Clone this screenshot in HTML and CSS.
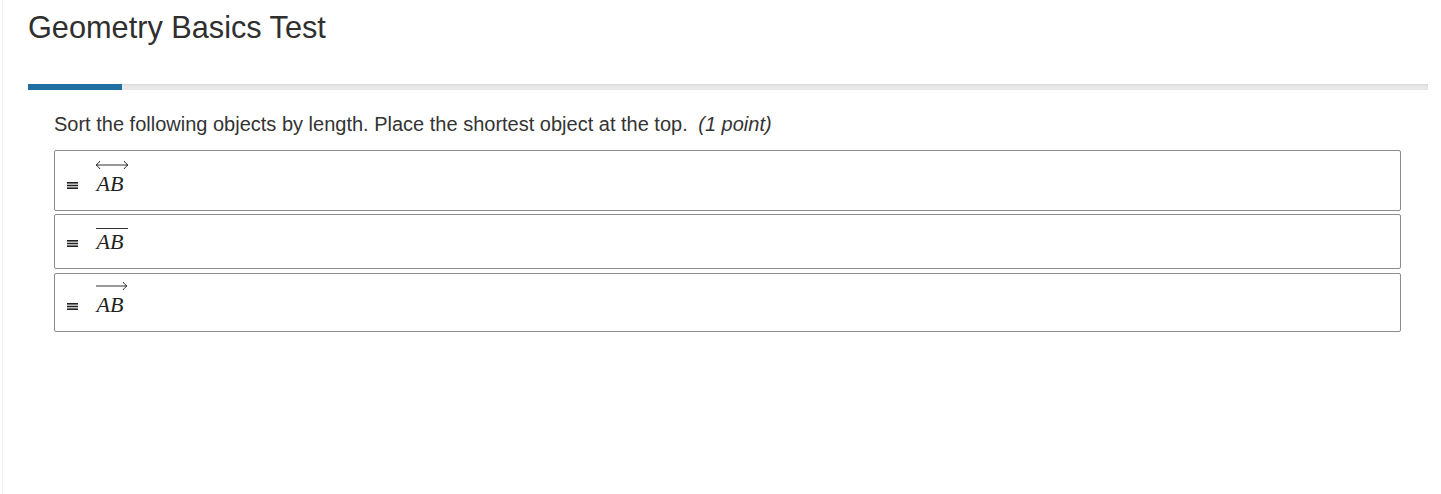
FILE: index.html
```html
<!DOCTYPE html>
<html lang="en">
<head>
<meta charset="utf-8">
<title>Geometry Basics Test</title>
<link rel="stylesheet" href="styles.css">
</head>
<body>
<div class="page">
  <h1 class="title">Geometry Basics Test</h1>
  <div class="progress"><div class="progress-bar" style="width: 6.7%"></div></div>
  <section class="question">
    <p class="prompt">Sort the following objects by length. Place the shortest object at the top. <em class="points">(1 point)</em></p>
    <ul class="sort-list">
      <li class="sort-item">
        <svg class="handle" width="11" height="7" viewBox="0 0 11 7"><rect x="0" y="0" width="11" height="1.6" fill="#222"/><rect x="0" y="2.7" width="11" height="1.6" fill="#222"/><rect x="0" y="5.4" width="11" height="1.6" fill="#222"/></svg>
        <span class="math">
          <svg class="accent" width="34" height="16" viewBox="0 0 34 16"><path d="M1 8 H33 M5 4 Q3 7 1 8 Q3 9 5 12 M29 4 Q31 7 33 8 Q31 9 29 12" fill="none" stroke="#333" stroke-width="1"/></svg>
          <span class="ab">AB</span>
        </span>
      </li>
      <li class="sort-item">
        <svg class="handle" width="11" height="7" viewBox="0 0 11 7"><rect x="0" y="0" width="11" height="1.6" fill="#222"/><rect x="0" y="2.7" width="11" height="1.6" fill="#222"/><rect x="0" y="5.4" width="11" height="1.6" fill="#222"/></svg>
        <span class="math">
          <svg class="accent" width="34" height="10" viewBox="0 0 34 10"><path d="M1 7.5 H33" fill="none" stroke="#333" stroke-width="1"/></svg>
          <span class="ab">AB</span>
        </span>
      </li>
      <li class="sort-item sort-item-ray">
        <svg class="handle" width="11" height="7" viewBox="0 0 11 7"><rect x="0" y="0" width="11" height="1.6" fill="#222"/><rect x="0" y="2.7" width="11" height="1.6" fill="#222"/><rect x="0" y="5.4" width="11" height="1.6" fill="#222"/></svg>
        <span class="math">
          <svg class="accent" width="34" height="14" viewBox="0 0 34 14"><path d="M1 6 H32 M28 2 Q30 5 32 6 Q30 7 28 10" fill="none" stroke="#333" stroke-width="1"/></svg>
          <span class="ab">AB</span>
        </span>
      </li>
    </ul>
  </section>
</div>
</body>
</html>
```

FILE: styles.css
```css
html, body {
  margin: 0;
  padding: 0;
  background: #fff;
}

body {
  font-family: "Liberation Sans", Arial, sans-serif;
  color: #333;
}

.page {
  margin-left: 2px;
  border-left: 1px solid #f2f2f2;
  min-height: 494px;
  box-sizing: border-box;
  padding: 10px 13px 0 25px;
}

.title {
  margin: 0;
  font-size: 30.7px;
  line-height: 36px;
  font-weight: normal;
  color: #2f2f2f;
}

.progress {
  margin-top: 38px;
  height: 6px;
  background: #e8e8e8;
  box-shadow: inset 0 1px 2px rgba(0, 0, 0, 0.08);
}

.progress-bar {
  height: 6px;
  background: #1f6fa2;
}

.question {
  padding: 0 27px 0 26px;
}

.prompt {
  margin: 23px 0 14px;
  font-size: 20px;
  line-height: 23px;
  color: #333;
}

.points {
  margin-left: 5px;
}

.sort-list {
  list-style: none;
  margin: 0;
  padding: 0;
  display: flex;
  flex-direction: column;
  gap: 3px;
}

.sort-item {
  border: 1px solid #8c8c8c;
  border-radius: 2px;
  padding: 6px 12px 16px;
  font-family: "Liberation Serif", "Times New Roman", serif;
  font-size: 22px;
  line-height: 21px;
}

.sort-item-ray {
  margin-top: 1px;
}

.handle {
  display: inline-block;
  vertical-align: baseline;
  margin-bottom: 2px;
  margin-right: 13px;
}

.math {
  display: inline-block;
  vertical-align: baseline;
}

.accent {
  display: block;
  overflow: visible;
  margin-left: -2px;
}

.ab {
  display: block;
  font-style: italic;
  color: #222;
}
```
